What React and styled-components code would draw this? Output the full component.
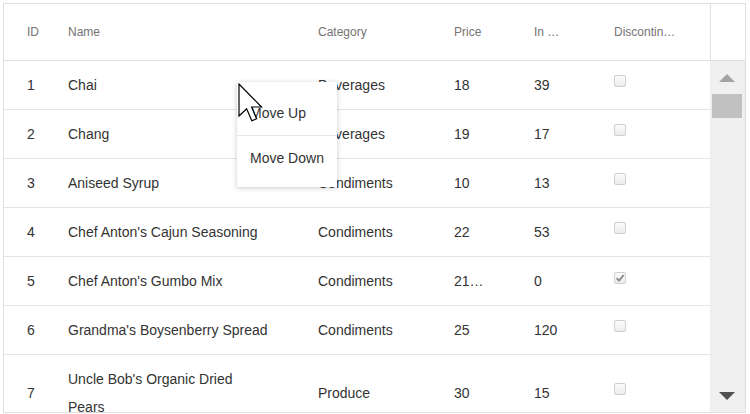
import React from "react";
import styled, { createGlobalStyle } from "styled-components";

const GlobalStyle = createGlobalStyle`
  html, body {
    margin: 0;
    padding: 0;
    background: #ffffff;
  }
  body {
    font-family: "Liberation Sans", Arial, sans-serif;
  }
`;

const products = [
  { id: 1, name: "Chai", category: "Beverages", price: "18", stock: "39", disc: false },
  { id: 2, name: "Chang", category: "Beverages", price: "19", stock: "17", disc: false },
  { id: 3, name: "Aniseed Syrup", category: "Condiments", price: "10", stock: "13", disc: false },
  { id: 4, name: "Chef Anton's Cajun Seasoning", category: "Condiments", price: "22", stock: "53", disc: false },
  { id: 5, name: "Chef Anton's Gumbo Mix", category: "Condiments", price: "21…", stock: "0", disc: true },
  { id: 6, name: "Grandma's Boysenberry Spread", category: "Condiments", price: "25", stock: "120", disc: false },
  { id: 7, name: "Uncle Bob's Organic Dried Pears", category: "Produce", price: "30", stock: "15", disc: false, tall: true },
];

const columns = [
  { key: "id", title: "ID", width: 41 },
  { key: "name", title: "Name", width: 250 },
  { key: "category", title: "Category", width: 136 },
  { key: "price", title: "Price", width: 80 },
  { key: "stock", title: "In …", width: 80 },
  { key: "disc", title: "Discontin…", width: 119 },
];

const App = () => {
  return (
    <>
      <GlobalStyle />
      <Grid>
        <HeaderRow>
          <Table>
            <Cols />
            <thead>
              <tr>
                {columns.map((c) => (
                  <HeadCell key={c.key}>{c.title}</HeadCell>
                ))}
              </tr>
            </thead>
          </Table>
          <ScrollHead />
        </HeaderRow>
        <BodyRow>
          <BodyArea>
            <Table>
              <Cols />
              <tbody>
                {products.map((p) => (
                  <Row key={p.id} $tall={p.tall}>
                    <Cell>{p.id}</Cell>
                    <Cell $wrap>{p.name}</Cell>
                    <Cell>{p.category}</Cell>
                    <Cell>{p.price}</Cell>
                    <Cell>{p.stock}</Cell>
                    <Cell>
                      <Check $checked={p.disc}>
                        {p.disc && (
                          <svg width="10" height="10" viewBox="0 0 10 10">
                            <path d="M1.5 5.2 L4 7.6 L8.6 2.2" fill="none" stroke="#8a8a8a" strokeWidth="1.8" />
                          </svg>
                        )}
                      </Check>
                    </Cell>
                  </Row>
                ))}
              </tbody>
            </Table>
          </BodyArea>
          <Scrollbar>
            <ArrowButton>
              <Triangle $up />
            </ArrowButton>
            <Thumb />
            <Track />
            <ArrowButton>
              <Triangle />
            </ArrowButton>
          </Scrollbar>
        </BodyRow>

        <Menu>
          <MenuItem>Move Up</MenuItem>
          <MenuItem>Move Down</MenuItem>
        </Menu>

        <Cursor width="26" height="40" viewBox="0 0 13 20">
          <path
            d="M0.5 0.5 L0.5 16.5 L4.3 12.9 L6.9 18.9 L9.3 17.9 L6.8 12 L11.8 12 Z"
            fill="#ffffff"
            stroke="#000000"
            strokeWidth="0.6"
            strokeLinejoin="miter"
          />
        </Cursor>
      </Grid>
    </>
  );
};

const Cols = () => (
  <colgroup>
    {columns.map((c) => (
      <col key={c.key} style={{ width: c.width }} />
    ))}
  </colgroup>
);

const Grid = styled.div`
  position: relative;
  margin: 3px 0 0 3px;
  width: 741px;
  height: 408px;
  border: 1px solid #dedede;
  overflow: hidden;
  display: flex;
  flex-direction: column;
  background: #fff;
`;

const HeaderRow = styled.div`
  display: flex;
  height: 57px;
  flex-shrink: 0;
  border-bottom: 1px solid #e0e0e0;
  box-sizing: border-box;
`;

const Table = styled.table`
  table-layout: fixed;
  border-collapse: collapse;
  width: 706px;
  flex-shrink: 0;
`;

const HeadCell = styled.th`
  height: 56px;
  padding: 0 0 0 23px;
  text-align: left;
  font-weight: normal;
  font-size: 12px;
  color: #737373;
  white-space: nowrap;
  overflow: hidden;
  vertical-align: middle;
`;

const ScrollHead = styled.div`
  flex: 1;
  border-left: 1px solid #e0e0e0;
`;

const BodyRow = styled.div`
  display: flex;
  flex: 1;
  min-height: 0;
`;

const BodyArea = styled.div`
  width: 706px;
  overflow: hidden;
`;

const Row = styled.tr`
  height: ${(p) => (p.$tall ? "76px" : "48px")};
  border-bottom: 1px solid #e4e4e4;
`;

const Cell = styled.td`
  padding: ${(p) => (p.$wrap ? "10px 24px 10px 23px" : "0 8px 0 23px")};
  font-size: 14px;
  line-height: ${(p) => (p.$wrap ? "28px" : "18px")};
  color: #333333;
  vertical-align: middle;
  white-space: ${(p) => (p.$wrap ? "normal" : "nowrap")};
  overflow: hidden;
`;

const Check = styled.span`
  display: inline-flex;
  align-items: center;
  justify-content: center;
  box-sizing: border-box;
  width: 12px;
  height: 12px;
  border: 1px solid #cfcfcf;
  border-radius: 2px;
  background: linear-gradient(#fbfbfb, #ececec);
  position: relative;
  top: -3px;
`;

const Scrollbar = styled.div`
  flex: 1;
  background: #f0f0f0;
  border-left: 1px solid #ececec;
  display: flex;
  flex-direction: column;
`;

const ArrowButton = styled.div`
  height: 33px;
  display: flex;
  align-items: center;
  justify-content: center;
  padding-right: 3px;
  flex-shrink: 0;
`;

const Triangle = styled.span`
  width: 0;
  height: 0;
  border-left: 8px solid transparent;
  border-right: 8px solid transparent;
  ${(p) =>
    p.$up
      ? "border-bottom: 8px solid #a3a3a3;"
      : "border-top: 8px solid #505050;"}
`;

const Thumb = styled.div`
  margin-left: 1px;
  width: 30px;
  height: 24px;
  background: #c1c1c1;
  flex-shrink: 0;
`;

const Track = styled.div`
  flex: 1;
`;

const Menu = styled.div`
  position: absolute;
  left: 233px;
  top: 78px;
  width: 100px;
  padding: 8px 0 7px;
  background: #fff;
  box-shadow: 0 1px 5px rgba(0, 0, 0, 0.22);
  display: flex;
  flex-direction: column;
`;

const MenuItem = styled.div`
  height: 45px;
  box-sizing: border-box;
  display: flex;
  align-items: center;
  padding-left: 13px;
  font-size: 14px;
  color: #333;
  & + & {
    border-top: 1px solid #e6e6e6;
  }
`;

const Cursor = styled.svg`
  position: absolute;
  left: 234px;
  top: 79px;
  pointer-events: none;
`;

export default App;
